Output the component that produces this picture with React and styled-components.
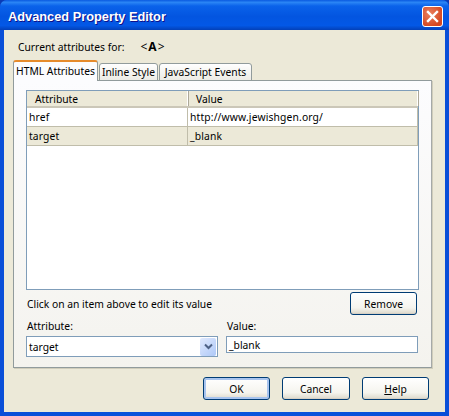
import React from "react";
import styled, { createGlobalStyle } from "styled-components";

const Global = createGlobalStyle`
  html, body {
    margin: 0;
    padding: 0;
    background: #0a3bb5;
  }
  * {
    box-sizing: border-box;
  }
`;

const Window = styled.div`
  width: 449px;
  height: 416px;
  display: flex;
  flex-direction: column;
  overflow: hidden;
  border-radius: 7px 7px 0 0;
  background: linear-gradient(90deg, #0a4fd8 0%, #0855dd 50%, #0a4fd8 100%);
  font-family: "Noto Sans", "Liberation Sans", sans-serif;
  font-size: 10.3px;
  color: #000;
`;

const TitleBar = styled.div`
  height: 30px;
  flex: none;
  display: flex;
  align-items: center;
  justify-content: space-between;
  padding: 0 6px 0 8px;
  background: linear-gradient(
    180deg,
    #0a5ae0 0%,
    #2a85f5 8%,
    #0a62ea 20%,
    #0355e0 55%,
    #0358e6 85%,
    #0340b8 100%
  );
`;

const Title = styled.span`
  font-family: "Liberation Sans", sans-serif;
  font-size: 12.8px;
  font-weight: 700;
  color: #fff;
  text-shadow: 1px 1px 0 #0f1089;
  padding-top: 3px;
`;

const CloseButton = styled.div`
  width: 21px;
  height: 21px;
  margin-top: 3px;
  display: flex;
  align-items: center;
  justify-content: center;
  border: 1px solid #fff;
  border-radius: 3px;
  background: radial-gradient(circle at 35% 35%, #e9805f, #d5461f 75%);
`;

const Body = styled.div`
  flex: 1;
  margin: 0 4px 4px 4px;
  background: #ece9d8;
  display: flex;
  flex-direction: column;
  padding: 0 13px 0 9px;
`;

const Header = styled.div`
  height: 30px;
  display: flex;
  align-items: center;
  padding: 3px 0 0 5px;
  gap: 16px;
`;

const TagName = styled.span`
  font-size: 12px;
  letter-spacing: 1px;
  b {
    font-weight: 700;
  }
`;

const Tabs = styled.div`
  display: flex;
  align-items: flex-end;
  height: 21px;
  position: relative;
  z-index: 1;
  margin-bottom: -1px;
`;

const Tab = styled.div`
  height: ${(p) => (p.$active ? "21px" : "18px")};
  width: ${(p) => p.$w}px;
  margin-left: ${(p) => (p.$active ? "0" : "1px")};
  padding-bottom: ${(p) => (p.$active ? "2px" : "0")};
  display: flex;
  align-items: center;
  justify-content: center;
  border: 1px solid #919b9c;
  border-bottom: ${(p) => (p.$active ? "none" : "1px solid #919b9c")};
  border-top: ${(p) => (p.$active ? "2px solid #e68b2c" : "1px solid #919b9c")};
  border-radius: 3px 3px 0 0;
  background: ${(p) => (p.$active ? "#fcfcfe" : "linear-gradient(180deg, #fff, #ecebe5)")};
  white-space: nowrap;
`;

const Panel = styled.div`
  height: 288px;
  border: 1px solid #919b9c;
  border-right-color: #a5a9a8;
  background: linear-gradient(180deg, #fcfcfe 0%, #f4f3ee 100%);
  padding: 9px 12px 0 12px;
  display: flex;
  flex-direction: column;
  box-shadow: 1px 1px 0 #d0cdbb;
`;

const Table = styled.div`
  height: 200px;
  flex: none;
  background: #fff;
  border: 1px solid #7f9db9;
`;

const Row = styled.div`
  display: grid;
  grid-template-columns: 161px 1fr;
  height: 19px;
  background: ${(p) => (p.$selected ? "#ece9d8" : "#fff")};
  border-bottom: 1px solid #c0bdaa;
`;

const HeadRow = styled(Row)`
  height: 17px;
  background: #ece9d8;
  border-bottom: 2px solid #cbc7b8;
`;

const HeadCell = styled.div`
  padding-left: 8px;
  border-right: 1px solid #fff;
  box-shadow: 1px 0 0 #aca899;
  display: flex;
  align-items: center;
`;

const Cell = styled.div`
  padding-left: 2px;
  letter-spacing: 0.15px;
  border-right: 1px solid #c0bdaa;
  display: flex;
  align-items: center;
`;

const HintRow = styled.div`
  display: flex;
  align-items: center;
  justify-content: space-between;
  height: 23px;
  margin-top: 2px;
  padding: 0 2px 0 1px;
`;

const Fields = styled.div`
  display: grid;
  grid-template-columns: 192px 192px;
  gap: 8px;
  margin-top: 3px;
`;

const Field = styled.div`
  display: flex;
  flex-direction: column;
  gap: 3px;
`;

const Label = styled.label`
  padding-left: 1px;
  height: 15px;
  line-height: 17px;
`;

const SelectBox = styled.div`
  height: 21px;
  border: 1px solid #7f9db9;
  background: #fff;
  padding: 1px 1px 1px 2px;
  display: flex;
  align-items: center;
  justify-content: space-between;
`;

const SelectArrow = styled.div`
  width: 16px;
  height: 18px;
  border-radius: 2px;
  background: linear-gradient(135deg, #e1eafe, #aec8f7);
  display: flex;
  align-items: center;
  justify-content: center;
`;

const TextInput = styled.div`
  height: 17px;
  border: 1px solid #7f9db9;
  background: #fff;
  padding-left: 2px;
  display: flex;
  align-items: center;
`;

const Button = styled.button`
  width: ${(p) => p.$w}px;
  height: 23px;
  padding: 0;
  font: inherit;
  color: #000;
  border: 1px solid #003c74;
  border-radius: 3px;
  background: linear-gradient(180deg, #fff 0%, #f5f4ee 70%, #dcd8ca 100%);
  box-shadow: ${(p) =>
    p.$primary ? "inset 0 0 0 2px #a8c4ee" : "inset 0 -1px 0 #d6d0c5"};
  u {
    text-decoration: underline;
  }
`;

const Footer = styled.div`
  flex: 1;
  display: flex;
  justify-content: flex-end;
  align-items: flex-start;
  gap: 12px;
  padding: 9px 3px 0 0;
`;

const rows = [
  { name: "href", value: "http://www.jewishgen.org/" },
  { name: "target", value: "_blank", selected: true },
];

export default function App() {
  return (
    <>
      <Global />
      <Window>
        <TitleBar>
          <Title>Advanced Property Editor</Title>
          <CloseButton>
            <svg width="13" height="13" viewBox="0 0 13 13">
              <path
                d="M2 2 L11 11 M11 2 L2 11"
                stroke="#fff"
                strokeWidth="2.4"
                strokeLinecap="square"
              />
            </svg>
          </CloseButton>
        </TitleBar>
        <Body>
          <Header>
            <span>Current attributes for:</span>
            <TagName>
              &lt;<b>A</b>&gt;
            </TagName>
          </Header>
          <Tabs>
            <Tab $active $w={85}>HTML Attributes</Tab>
            <Tab $w={59}>Inline Style</Tab>
            <Tab $w={93}>JavaScript Events</Tab>
          </Tabs>
          <Panel>
            <Table>
              <HeadRow>
                <HeadCell>Attribute</HeadCell>
                <HeadCell>Value</HeadCell>
              </HeadRow>
              {rows.map((r) => (
                <Row key={r.name} $selected={r.selected}>
                  <Cell>{r.name}</Cell>
                  <Cell>{r.value}</Cell>
                </Row>
              ))}
            </Table>
            <HintRow>
              <span>Click on an item above to edit its value</span>
              <Button $w={67}>Remove</Button>
            </HintRow>
            <Fields>
              <Field>
                <Label>Attribute:</Label>
                <SelectBox>
                  <span>target</span>
                  <SelectArrow>
                    <svg width="9" height="7" viewBox="0 0 9 7">
                      <path
                        d="M1 1.5 L4.5 5 L8 1.5"
                        fill="none"
                        stroke="#4d6185"
                        strokeWidth="2"
                      />
                    </svg>
                  </SelectArrow>
                </SelectBox>
              </Field>
              <Field>
                <Label>Value:</Label>
                <TextInput>_blank</TextInput>
              </Field>
            </Fields>
          </Panel>
          <Footer>
            <Button $w={67} $primary>
              OK
            </Button>
            <Button $w={68}>Cancel</Button>
            <Button $w={67}>
              <u>H</u>elp
            </Button>
          </Footer>
        </Body>
      </Window>
    </>
  );
}
